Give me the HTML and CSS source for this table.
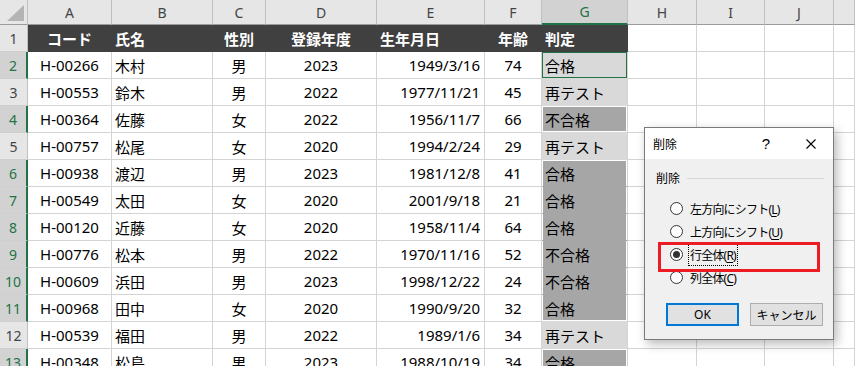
FILE: index.html
```html
<!DOCTYPE html>
<html lang="ja">
<head>
<meta charset="utf-8">
<link rel="stylesheet" href="styles.css">
</head>
<body>
<div class="sheet">
  <div class="row colhead">
    <div class="corner"><span class="tri"></span></div>
    <div>A</div><div>B</div><div>C</div><div>D</div><div>E</div><div>F</div>
    <div class="sel">G</div><div>H</div><div>I</div><div>J</div><div></div>
  </div>
  <div class="row">
    <div class="rh">1</div>
    <div class="hd ct">コード</div><div class="hd lt">氏名</div><div class="hd ct">性別</div>
    <div class="hd ct">登録年度</div><div class="hd lt">生年月日</div><div class="hd ct">年齢</div>
    <div class="hd lt">判定</div><div></div><div></div><div></div><div></div>
  </div>
  <div class="row">
    <div class="rh sel">2</div>
    <div class="ct">H-00266</div><div class="lt">木村</div><div class="ct">男</div><div class="ct">2023</div>
    <div class="rt">1949/3/16</div><div class="ct">74</div><div class="lt g active">合格</div>
    <div></div><div></div><div></div><div></div>
  </div>
  <div class="row">
    <div class="rh">3</div>
    <div class="ct">H-00553</div><div class="lt">鈴木</div><div class="ct">男</div><div class="ct">2022</div>
    <div class="rt">1977/11/21</div><div class="ct">45</div><div class="lt g">再テスト</div>
    <div></div><div></div><div></div><div></div>
  </div>
  <div class="row">
    <div class="rh sel">4</div>
    <div class="ct">H-00364</div><div class="lt">佐藤</div><div class="ct">女</div><div class="ct">2022</div>
    <div class="rt">1956/11/7</div><div class="ct">66</div><div class="lt gs single">不合格</div>
    <div></div><div></div><div></div><div></div>
  </div>
  <div class="row">
    <div class="rh">5</div>
    <div class="ct">H-00757</div><div class="lt">松尾</div><div class="ct">女</div><div class="ct">2020</div>
    <div class="rt">1994/2/24</div><div class="ct">29</div><div class="lt g">再テスト</div>
    <div></div><div></div><div></div><div></div>
  </div>
  <div class="row">
    <div class="rh sel">6</div>
    <div class="ct">H-00938</div><div class="lt">渡辺</div><div class="ct">男</div><div class="ct">2023</div>
    <div class="rt">1981/12/8</div><div class="ct">41</div><div class="lt gs top">合格</div>
    <div></div><div></div><div></div><div></div>
  </div>
  <div class="row">
    <div class="rh sel">7</div>
    <div class="ct">H-00549</div><div class="lt">太田</div><div class="ct">女</div><div class="ct">2020</div>
    <div class="rt">2001/9/18</div><div class="ct">21</div><div class="lt gs mid">合格</div>
    <div></div><div></div><div></div><div></div>
  </div>
  <div class="row">
    <div class="rh sel">8</div>
    <div class="ct">H-00120</div><div class="lt">近藤</div><div class="ct">女</div><div class="ct">2020</div>
    <div class="rt">1958/11/4</div><div class="ct">64</div><div class="lt gs mid">合格</div>
    <div></div><div></div><div></div><div></div>
  </div>
  <div class="row">
    <div class="rh sel">9</div>
    <div class="ct">H-00776</div><div class="lt">松本</div><div class="ct">男</div><div class="ct">2022</div>
    <div class="rt">1970/11/16</div><div class="ct">52</div><div class="lt gs mid">不合格</div>
    <div></div><div></div><div></div><div></div>
  </div>
  <div class="row">
    <div class="rh sel">10</div>
    <div class="ct">H-00609</div><div class="lt">浜田</div><div class="ct">男</div><div class="ct">2023</div>
    <div class="rt">1998/12/22</div><div class="ct">24</div><div class="lt gs mid">不合格</div>
    <div></div><div></div><div></div><div></div>
  </div>
  <div class="row">
    <div class="rh sel">11</div>
    <div class="ct">H-00968</div><div class="lt">田中</div><div class="ct">女</div><div class="ct">2020</div>
    <div class="rt">1990/9/20</div><div class="ct">32</div><div class="lt gs bot">合格</div>
    <div></div><div></div><div></div><div></div>
  </div>
  <div class="row">
    <div class="rh">12</div>
    <div class="ct">H-00539</div><div class="lt">福田</div><div class="ct">男</div><div class="ct">2022</div>
    <div class="rt">1989/1/6</div><div class="ct">34</div><div class="lt g">再テスト</div>
    <div></div><div></div><div></div><div></div>
  </div>
  <div class="row">
    <div class="rh sel">13</div>
    <div class="ct">H-00348</div><div class="lt">松島</div><div class="ct">男</div><div class="ct">2023</div>
    <div class="rt">1988/10/19</div><div class="ct">34</div><div class="lt gs single">合格</div>
    <div></div><div></div><div></div><div></div>
  </div>
</div>

<div class="dlg">
  <div class="dlg-title">
    <span class="ttl">削除</span>
    <span class="q">?</span>
    <svg class="x" width="10" height="10" viewBox="0 0 10 10"><path d="M0.5 0.5 L9.5 9.5 M9.5 0.5 L0.5 9.5" stroke="#000" stroke-width="1.1" fill="none"/></svg>
  </div>
  <div class="dlg-body">
    <div class="grp"><span>削除</span><span class="gline"></span></div>
    <div class="opts">
      <div class="opt"><span class="radio"></span><span class="lbl">左方向にシフト(<u>L</u>)</span></div>
      <div class="opt"><span class="radio"></span><span class="lbl">上方向にシフト(<u>U</u>)</span></div>
      <div class="opt"><span class="radio on"></span><span class="lbl focus">行全体(<u>R</u>)</span></div>
      <div class="opt"><span class="radio"></span><span class="lbl">列全体(<u>C</u>)</span></div>
    </div>
    <div class="btns">
      <div class="btn ok">OK</div>
      <div class="btn">キャンセル</div>
    </div>
  </div>
  <div class="mark"></div>
</div>
</body>
</html>
```

FILE: styles.css
```css
html, body {
  margin: 0;
  height: 100%;
  overflow: hidden;
  background: #fff;
}
body {
  font-family: "Noto Sans", "Noto Sans CJK JP", sans-serif;
  position: relative;
  color: #000;
}
.row {
  display: grid;
  grid-template-columns: 28px 84px 101px 53px 111px 108px 57px 86px 69px 68px 69px 1fr;
  height: 27px;
}
.row > div {
  box-sizing: border-box;
  border-right: 1px solid #d4d4d4;
  border-bottom: 1px solid #d4d4d4;
  display: flex;
  align-items: center;
  font-size: 15px;
  white-space: nowrap;
  overflow: hidden;
}
.colhead { height: 25px; }
.colhead > div {
  background: #e6e6e6;
  border-right-color: #c0c0c0;
  border-bottom-color: #9b9b9b;
  justify-content: center;
  font-size: 14px;
  color: #444;
}
.colhead > div.sel {
  background: #d2d2d2;
  color: #217346;
  border-bottom: 2px solid #217346;
}
.corner { position: relative; }
.tri {
  position: absolute;
  right: 3px;
  bottom: 3px;
  width: 0;
  height: 0;
  border-left: 17px solid transparent;
  border-bottom: 16px solid #b4b4b4;
}
.row > .rh {
  background: #e6e6e6;
  justify-content: center;
  color: #444;
  font-size: 14px;
  border-right-color: #c0c0c0;
  border-bottom-color: #cfcfcf;
}
.row > .rh.sel {
  background: #d2d2d2;
  color: #217346;
  border-right: 2px solid #217346;
}
.ct { justify-content: center; }
.lt { justify-content: flex-start; padding-left: 3px; }
.rt { justify-content: flex-end; padding-right: 4px; }
.row > .hd {
  background: #404040;
  color: #fff;
  font-weight: bold;
  border-color: #404040;
}
.row > .g {
  background: #d9d9d9;
  border-bottom-color: #d9d9d9;
}
.row > .g.active {
  box-shadow: inset 0 0 0 1px #217346;
}
.row > .gs {
  background: #a6a6a6;
  border-bottom-color: #a6a6a6;
}
.row > .gs.single {
  box-shadow: inset 0 0 0 1px #fff;
  border-bottom-color: #d9d9d9;
}
.row > .gs.top {
  box-shadow: inset 1px 0 #fff, inset -1px 0 #fff, inset 0 1px #fff;
}
.row > .gs.mid {
  box-shadow: inset 1px 0 #fff, inset -1px 0 #fff;
}
.row > .gs.bot {
  box-shadow: inset 1px 0 #fff, inset -1px 0 #fff, inset 0 -1px #fff;
  border-bottom-color: #d9d9d9;
}

/* dialog */
.dlg {
  position: absolute;
  left: 644px;
  top: 127px;
  width: 190px;
  height: 213px;
  box-sizing: border-box;
  border: 1px solid #7a7a7a;
  background: #f0f0f0;
  box-shadow: 3px 4px 10px rgba(0,0,0,0.28);
  font-size: 12px;
  display: flex;
  flex-direction: column;
}
.dlg-title {
  background: #fff;
  height: 31px;
  display: flex;
  align-items: center;
  padding: 0 17px 0 8px;
}
.ttl { flex: 1; }
.q {
  font-family: "Liberation Sans", sans-serif;
  font-size: 15px;
  margin-right: 36px;
}
.dlg-body {
  padding: 11px 9px 0 11px;
  display: flex;
  flex-direction: column;
}
.grp {
  display: flex;
  align-items: center;
  height: 16px;
  gap: 7px;
}
.gline {
  flex: 1;
  height: 1px;
  background: #d6d6d6;
}
.opts {
  margin-top: 11px;
  padding-left: 14px;
}
.opt {
  height: 23px;
  display: flex;
  align-items: center;
}
.radio {
  width: 13px;
  height: 13px;
  box-sizing: border-box;
  border: 1px solid #333;
  border-radius: 50%;
  background: #fff;
  margin-right: 7px;
  position: relative;
  flex: none;
}
.radio.on::after {
  content: "";
  position: absolute;
  left: 2px;
  top: 2px;
  width: 7px;
  height: 7px;
  border-radius: 50%;
  background: #333;
}
.lbl { letter-spacing: -0.8px; }
.lbl u { text-underline-offset: 2px; }
.focus {
  outline: 1px dotted #000;
  outline-offset: 1px;
}
.btns {
  margin-top: 14px;
  display: flex;
  gap: 11px;
  padding-left: 10px;
}
.btn {
  width: 73px;
  height: 23px;
  box-sizing: border-box;
  border: 1px solid #adadad;
  background: #e1e1e1;
  display: flex;
  align-items: center;
  justify-content: center;
}
.btn.ok {
  border: 2px solid #0078d7;
}
.mark {
  position: absolute;
  left: 13px;
  top: 114px;
  width: 162px;
  height: 30px;
  box-sizing: border-box;
  border: 3px solid #ed1c24;
}
```
